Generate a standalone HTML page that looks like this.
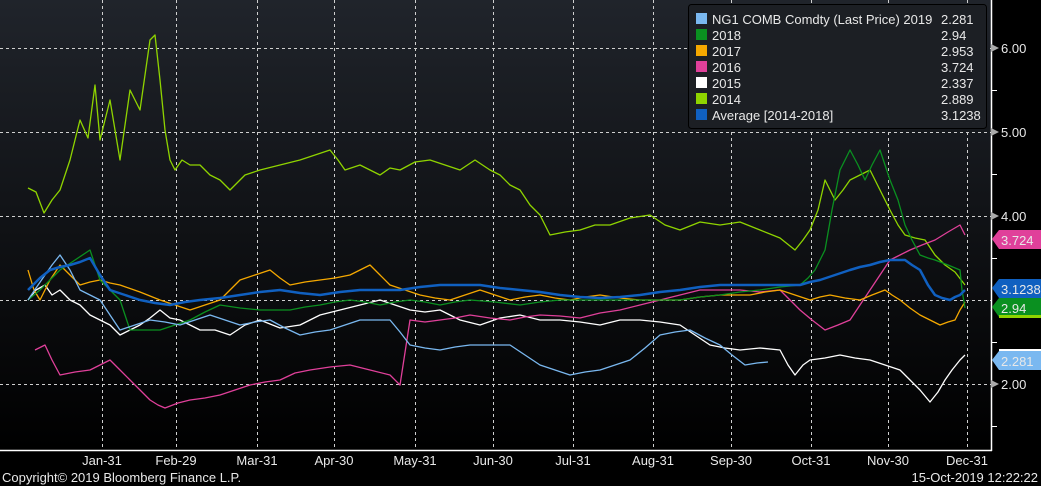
<!DOCTYPE html>
<html><head><meta charset="utf-8"><style>
html,body{margin:0;padding:0;background:#000;width:1041px;height:486px;overflow:hidden}
svg{display:block}
text{font-family:"Liberation Sans",sans-serif;font-size:13px;fill:#e8e8e8}
</style></head><body>
<svg width="1041" height="486" viewBox="0 0 1041 486">
<defs><linearGradient id="bg" x1="0" y1="0" x2="0" y2="1"><stop offset="0" stop-color="#20242b"/><stop offset="1" stop-color="#000"/></linearGradient></defs>
<rect x="0" y="0" width="991" height="450" fill="url(#bg)"/>
<g stroke="#cfcfcf" stroke-width="1" stroke-dasharray="3,3" fill="none">
<line x1="0" y1="48.5" x2="991" y2="48.5"/><line x1="0" y1="132.5" x2="991" y2="132.5"/><line x1="0" y1="216.5" x2="991" y2="216.5"/><line x1="0" y1="300.5" x2="991" y2="300.5"/><line x1="0" y1="384.5" x2="991" y2="384.5"/>
<line x1="102.5" y1="0" x2="102.5" y2="450"/><line x1="176.5" y1="0" x2="176.5" y2="450"/><line x1="257.5" y1="0" x2="257.5" y2="450"/><line x1="334.5" y1="0" x2="334.5" y2="450"/><line x1="415.5" y1="0" x2="415.5" y2="450"/><line x1="493.5" y1="0" x2="493.5" y2="450"/><line x1="573.5" y1="0" x2="573.5" y2="450"/><line x1="653.5" y1="0" x2="653.5" y2="450"/><line x1="731.5" y1="0" x2="731.5" y2="450"/><line x1="811.5" y1="0" x2="811.5" y2="450"/><line x1="888.5" y1="0" x2="888.5" y2="450"/><line x1="967.5" y1="0" x2="967.5" y2="450"/>
</g>
<g stroke="#fff" stroke-width="1.5"><line x1="0" y1="450.5" x2="992" y2="450.5"/><line x1="991.5" y1="0" x2="991.5" y2="451"/></g>
<g stroke="#fff" stroke-width="1"><line x1="991" y1="90.5" x2="997" y2="90.5"/><line x1="991" y1="174.5" x2="997" y2="174.5"/><line x1="991" y1="258.5" x2="997" y2="258.5"/><line x1="991" y1="342.5" x2="997" y2="342.5"/><line x1="991" y1="426.5" x2="997" y2="426.5"/></g>
<g fill="#aaa"><path d="M991 44l8 4-8 4z"/><path d="M991 128l8 4-8 4z"/><path d="M991 212l8 4-8 4z"/><path d="M991 380l8 4-8 4z"/></g>
<text x="1001" y="53">6.00</text><text x="1001" y="137">5.00</text><text x="1001" y="221">4.00</text><text x="1001" y="389">2.00</text>
<g fill="none" stroke-width="1.3" stroke-linejoin="round">
<polyline stroke="#8fd400" points="28,188 36,192 44,213 52,200 60,190 70,160 80,120 88,138 95,85 100,140 110,100 115,130 120,160 130,90 135,100 140,110 150,40 155,35 160,80 165,130 170,160 175,170 182,160 190,165 200,165 210,175 220,180 230,190 245,175 260,170 280,165 300,160 315,155 330,150 338,160 345,170 360,165 370,170 380,175 390,168 400,170 415,162 430,160 445,165 460,170 475,160 490,170 500,175 510,185 520,190 530,205 540,215 550,235 565,232 580,230 595,225 610,225 630,218 650,215 665,225 680,230 700,222 720,225 740,222 760,230 780,238 795,250 803,240 810,230 818,210 825,180 835,200 843,190 850,180 860,175 870,170 880,190 890,210 898,225 905,235 915,238 925,240 935,255 945,265 955,272 965,285"/>
<polyline stroke="#ffffff" points="28,300 36,290 45,285 52,295 60,290 70,300 80,305 90,315 100,320 110,325 120,335 130,330 140,325 150,318 160,310 170,318 180,320 190,325 200,330 215,330 230,335 245,325 260,320 280,328 300,325 320,315 340,310 360,305 380,300 395,305 410,310 425,312 440,310 460,320 480,325 500,318 520,315 540,320 560,320 580,322 600,325 620,320 640,320 660,322 680,325 695,335 710,345 725,348 740,350 760,348 780,350 788,365 795,375 803,365 810,360 825,358 840,355 855,358 870,360 885,365 900,370 910,380 920,390 930,402 938,392 945,380 952,370 960,360 965,355"/>
<polyline stroke="#e0409a" points="35,350 45,345 52,360 60,375 75,372 90,370 100,365 110,360 120,370 130,380 140,390 150,400 158,405 165,408 178,403 190,400 205,398 220,395 235,390 250,385 265,382 280,380 295,373 310,370 330,367 350,365 370,370 390,375 400,385 410,320 425,322 440,320 455,318 470,315 490,318 510,320 525,317 540,315 560,316 580,318 600,313 620,310 640,305 660,300 680,295 700,290 720,290 740,290 760,292 780,290 790,300 800,310 812,320 825,330 838,325 850,320 860,305 870,290 880,275 890,260 900,255 910,250 922,245 935,240 948,232 960,225 965,235"/>
<polyline stroke="#f5a800" points="28,270 34,290 40,300 50,280 60,265 70,275 80,285 90,282 100,280 110,283 120,285 140,292 160,300 175,305 190,310 205,305 220,300 230,290 240,280 255,275 270,270 280,278 290,285 305,282 320,280 335,278 350,275 360,270 370,265 380,275 390,285 405,290 420,295 435,298 450,300 465,295 480,290 495,295 510,300 525,297 540,295 555,298 570,300 585,297 600,295 620,298 640,300 660,300 680,300 700,297 720,295 735,295 750,295 765,292 780,290 795,295 810,300 820,297 830,295 845,298 860,300 872,295 885,290 892,295 900,300 910,308 920,315 930,320 940,325 948,322 955,320 960,310 965,302"/>
<polyline stroke="#0a9020" points="28,300 40,290 50,280 55,275 60,270 75,260 90,250 95,265 100,280 110,290 120,300 125,315 130,330 145,330 160,330 175,325 190,320 205,312 220,305 240,308 260,310 275,310 290,310 305,307 320,305 335,302 350,300 365,302 380,305 395,302 410,300 425,302 440,305 455,302 470,300 495,302 520,305 540,302 560,300 580,300 600,300 620,300 640,300 660,300 680,300 700,297 720,295 740,292 760,290 780,287 800,285 808,278 815,270 820,260 825,250 832,210 840,170 845,160 850,150 858,165 865,180 872,165 880,150 885,165 890,180 898,200 905,225 912,240 920,255 928,258 935,260 948,265 960,270 962,290 965,308"/>
<polyline stroke="#7ab8f0" points="28,300 36,288 45,275 52,265 60,255 70,270 80,290 90,295 100,300 110,315 120,330 135,325 150,320 165,322 180,325 195,320 210,315 225,320 240,325 255,322 270,320 285,328 300,335 315,332 330,330 345,325 360,320 375,320 390,320 400,332 410,345 425,348 440,350 455,347 470,345 490,345 510,345 525,355 540,365 555,370 570,375 585,372 600,370 615,365 630,360 645,348 660,335 675,332 690,330 705,338 720,345 732,355 745,365 757,363 768,362"/>
<polyline stroke="#1060c0" stroke-width="2.5" points="28,290 40,278 50,270 60,267 70,265 80,262 90,258 100,275 110,290 125,295 140,300 155,303 170,305 185,302 200,300 220,298 240,295 260,292 280,290 300,293 320,295 340,292 360,290 380,290 400,290 420,287 440,285 460,285 480,285 500,288 520,290 540,292 560,295 580,297 600,298 620,297 640,295 660,292 680,290 700,287 720,285 740,285 760,285 780,285 800,285 810,282 820,280 835,275 850,270 860,267 870,265 880,262 890,260 898,260 905,260 912,265 920,270 928,285 935,295 942,298 950,300 955,297 960,295 965,290"/>
</g>
<path d="M992 239l7-9h42v19h-42z" fill="#e0409a"/><text x="1001" y="245" fill="#fff">3.724</text>
<path d="M992 288l7-9h42v19h-42z" fill="#1060c0"/><text x="1001" y="294" fill="#fff">3.1238</text>
<path d="M992 307l7-9h42v19h-42z" fill="#0a9020"/><rect x="999" y="315" width="42" height="3" fill="#8fd400"/><text x="1001" y="313" fill="#fff">2.94</text>
<rect x="999" y="349" width="42" height="3" fill="#fff"/>
<path d="M992 360l7-9h42v19h-42z" fill="#7ab8f0"/><text x="1001" y="366" fill="#000">2.281</text>
<rect x="688.5" y="4.5" width="298" height="124" rx="3" fill="#1c1f24" stroke="#000"/>
<g><rect x="696" y="13" width="11" height="11" fill="#7ab8f0"/><rect x="696" y="29" width="11" height="11" fill="#0a9020"/><rect x="696" y="45" width="11" height="11" fill="#f5a800"/><rect x="696" y="61" width="11" height="11" fill="#e0409a"/><rect x="696" y="77" width="11" height="11" fill="#fff"/><rect x="696" y="93" width="11" height="11" fill="#8fd400"/><rect x="696" y="109" width="11" height="11" fill="#1060c0"/></g>
<g><text x="712" y="24">NG1 COMB Comdty (Last Price) 2019</text><text x="712" y="40">2018</text><text x="712" y="56">2017</text><text x="712" y="72">2016</text><text x="712" y="88">2015</text><text x="712" y="104">2014</text><text x="712" y="120">Average [2014-2018]</text>
<text x="941" y="24">2.281</text><text x="941" y="40">2.94</text><text x="941" y="56">2.953</text><text x="941" y="72">3.724</text><text x="941" y="88">2.337</text><text x="941" y="104">2.889</text><text x="941" y="120">3.1238</text></g>
<g text-anchor="middle"><text x="102" y="465">Jan-31</text><text x="176" y="465">Feb-29</text><text x="257" y="465">Mar-31</text><text x="334" y="465">Apr-30</text><text x="415" y="465">May-31</text><text x="493" y="465">Jun-30</text><text x="573" y="465">Jul-31</text><text x="653" y="465">Aug-31</text><text x="731" y="465">Sep-30</text><text x="811" y="465">Oct-31</text><text x="888" y="465">Nov-30</text><text x="967" y="465">Dec-31</text></g>
<text x="2" y="482">Copyright© 2019 Bloomberg Finance L.P.</text>
<text x="1038" y="482" text-anchor="end">15-Oct-2019 12:22:22</text>
</svg>
</body></html>
